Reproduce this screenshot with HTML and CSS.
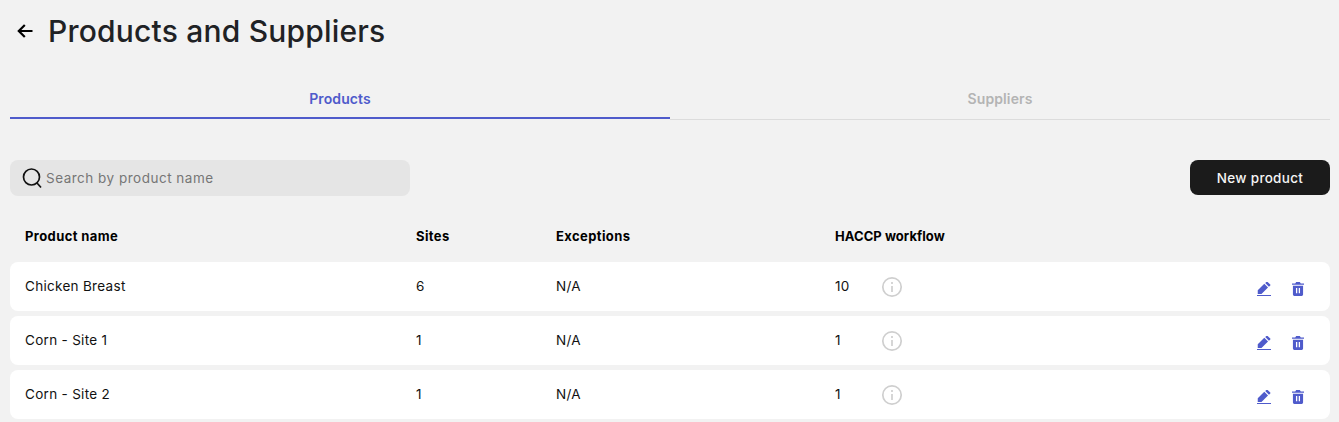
FILE: index.html
```html
<!DOCTYPE html>
<html lang="en">
<head>
<meta charset="utf-8">
<title>Products and Suppliers</title>
<link rel="stylesheet" href="styles.css">
</head>
<body>
<main class="page">
  <header class="title-bar">
    <svg class="back" width="16" height="14" viewBox="0 0 16 14"><path d="M15.500 7H2M7.800 1 1.800 7l6 6" fill="none" stroke="#000" stroke-width="2.200"/></svg>
    <h1>Products and Suppliers</h1>
  </header>
  <nav class="tabs">
    <div class="tab active">Products</div>
    <div class="tab">Suppliers</div>
  </nav>
  <div class="toolbar">
    <div class="search">
      <svg width="22" height="22" viewBox="0 0 22 22"><circle cx="10.500" cy="10" r="8" fill="none" stroke="#111" stroke-width="1.700"/><path d="M16 16l4 4.500" stroke="#111" stroke-width="1.700" fill="none"/></svg>
      <span>Search by product name</span>
    </div>
    <button class="new">New product</button>
  </div>
  <div class="row head">
    <div>Product name</div><div>Sites</div><div>Exceptions</div><div class="tight">HACCP workflow</div>
  </div>
  <div class="row item">
    <div>Chicken Breast</div><div>6</div><div>N/A</div>
    <div class="count"><span class="num">10</span><svg class="info" width="22" height="22" viewBox="0 0 22 22"><circle cx="11" cy="11" r="9.200" fill="none" stroke="#cfcfcf" stroke-width="1.700"/><path d="M11 10v6M11 6v2" stroke="#cfcfcf" stroke-width="1.700"/></svg></div>
    <div class="actions">
      <svg width="14" height="14" viewBox="0 0 15 15"><path d="M0 14h15v1.200H0zM.8 12.800V8.800l7-6.800 4 4-7 6.800zM8.800 1.200 10.200-.2c.3-.3.700-.3 1 0l3 3c.3.300.3.700 0 1L12.800 5z" fill="#4f5bcb"/></svg>
      <svg width="12" height="14" viewBox="0 0 13 15"><path fill-rule="evenodd" d="M4.500 0h4l1 1.500H13V3H0V1.500h3.500zM1 4h11v9.500a1.500 1.500 0 0 1-1.500 1.500h-8A1.500 1.500 0 0 1 1 13.500zM4.300 6.500V12h1.400V6.500zM7.300 6.500V12h1.400V6.500z" fill="#4f5bcb"/></svg>
    </div>
  </div>
  <div class="row item">
    <div>Corn - Site 1</div><div>1</div><div>N/A</div>
    <div class="count"><span class="num">1</span><svg class="info" width="22" height="22" viewBox="0 0 22 22"><circle cx="11" cy="11" r="9.200" fill="none" stroke="#cfcfcf" stroke-width="1.700"/><path d="M11 10v6M11 6v2" stroke="#cfcfcf" stroke-width="1.700"/></svg></div>
    <div class="actions">
      <svg width="14" height="14" viewBox="0 0 15 15"><path d="M0 14h15v1.200H0zM.8 12.800V8.800l7-6.800 4 4-7 6.800zM8.800 1.200 10.200-.2c.3-.3.700-.3 1 0l3 3c.3.300.3.700 0 1L12.800 5z" fill="#4f5bcb"/></svg>
      <svg width="12" height="14" viewBox="0 0 13 15"><path fill-rule="evenodd" d="M4.500 0h4l1 1.500H13V3H0V1.500h3.500zM1 4h11v9.500a1.500 1.500 0 0 1-1.500 1.500h-8A1.500 1.500 0 0 1 1 13.500zM4.300 6.500V12h1.400V6.500zM7.300 6.500V12h1.400V6.500z" fill="#4f5bcb"/></svg>
    </div>
  </div>
  <div class="row item">
    <div>Corn - Site 2</div><div>1</div><div>N/A</div>
    <div class="count"><span class="num">1</span><svg class="info" width="22" height="22" viewBox="0 0 22 22"><circle cx="11" cy="11" r="9.200" fill="none" stroke="#cfcfcf" stroke-width="1.700"/><path d="M11 10v6M11 6v2" stroke="#cfcfcf" stroke-width="1.700"/></svg></div>
    <div class="actions">
      <svg width="14" height="14" viewBox="0 0 15 15"><path d="M0 14h15v1.200H0zM.8 12.800V8.800l7-6.800 4 4-7 6.800zM8.800 1.200 10.200-.2c.3-.3.700-.3 1 0l3 3c.3.300.3.700 0 1L12.800 5z" fill="#4f5bcb"/></svg>
      <svg width="12" height="14" viewBox="0 0 13 15"><path fill-rule="evenodd" d="M4.500 0h4l1 1.500H13V3H0V1.500h3.500zM1 4h11v9.500a1.500 1.500 0 0 1-1.500 1.500h-8A1.500 1.500 0 0 1 1 13.500zM4.300 6.500V12h1.400V6.500zM7.300 6.500V12h1.400V6.500z" fill="#4f5bcb"/></svg>
    </div>
  </div>
</main>
</body>
</html>
```
FILE: styles.css
```css
* { box-sizing: border-box; }
html, body { margin: 0; height: 422px; overflow: hidden; }
body { background: #f2f2f2; font-family: Inter, "Liberation Sans", sans-serif; color: #111; }
.page { padding: 0 9px 0 10px; }
.title-bar { height: 62px; display: flex; align-items: center; gap: 15px; padding-left: 7px; }
.title-bar h1 { margin: 0; font-size: 30px; font-weight: 500; color: #1f2225; letter-spacing: 0.2px; line-height: 38px; }
.back { flex: none; }
.tabs { display: flex; align-items: flex-start; margin-top: 15px; height: 43px; }
.tab { flex: 1; height: 43px; text-align: center; font-size: 14px; font-weight: 600; color: #b4b4b4; letter-spacing: 0.1px; line-height: 43px; border-bottom: 1px solid #dcdcdc; }
.tab.active { height: 42px; color: #4f5bcb; border-bottom: 2px solid #4f5bcb; }
.toolbar { display: flex; justify-content: space-between; align-items: flex-start; margin-top: 40px; }
.search { width: 400px; height: 36px; background: #e5e5e5; border-radius: 8px; display: flex; align-items: center; gap: 3px; padding-left: 11px; font-size: 13.500px; color: #767676; letter-spacing: 0.5px; }
.new { width: 140px; height: 35px; border: 0; border-radius: 8px; background: #1b1b1b; color: #f5f5f5; font: 500 13.500px Inter, "Liberation Sans", sans-serif; letter-spacing: 0.3px; }
.row { display: grid; grid-template-columns: 391px 140px 279px 1fr auto; align-items: center; padding: 0 26px 0 15px; font-size: 13.500px; letter-spacing: 0.3px; }
.head { height: 66px; padding-top: 14px; font-weight: 700; font-size: 13px; letter-spacing: 0.4px; color: #000; }
.tight { letter-spacing: 0.05px; }
.item { height: 49px; padding-bottom: 1px; background: #fff; border-radius: 8px; margin-bottom: 5px; color: #111; }
.count { display: flex; align-items: center; }
.num { width: 46px; }
.info { display: block; margin-top: 2px; }
.actions { display: flex; align-items: center; gap: 21px; padding-top: 6px; }
.actions svg { display: block; }
```
